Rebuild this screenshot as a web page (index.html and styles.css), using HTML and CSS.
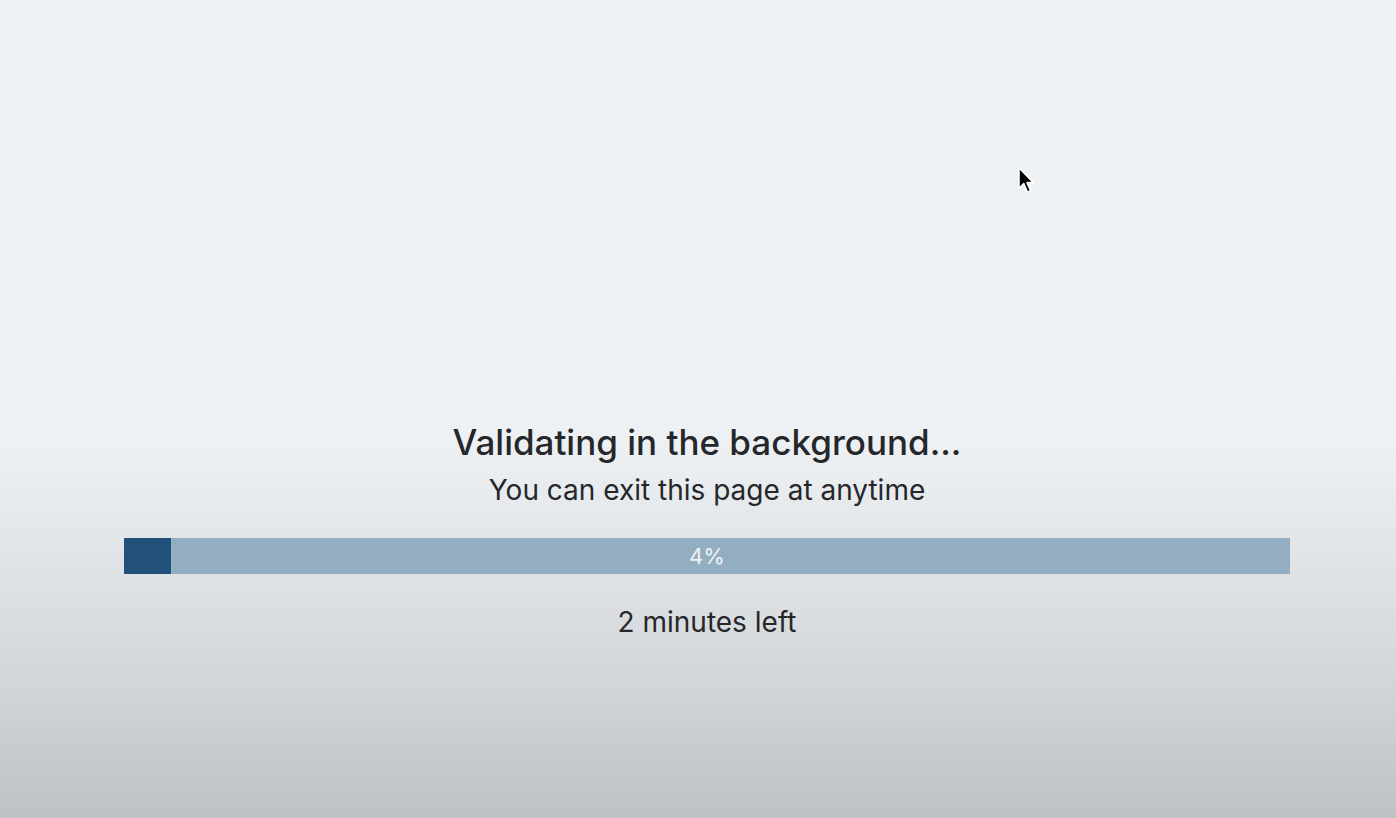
FILE: index.html
```html
<!DOCTYPE html>
<html lang="en">
<head>
<meta charset="utf-8">
<title>Validating</title>
<link rel="stylesheet" href="styles.css">
</head>
<body>
<main class="page">
  <section class="status">
    <h1 class="title">Validating in the background...</h1>
    <p class="subtitle">You can exit this page at anytime</p>
    <div class="progress">
      <div class="progress-fill" style="width: 4%"></div>
      <span class="progress-label">4%</span>
    </div>
    <p class="eta">2 minutes left</p>
  </section>
  <svg class="cursor" width="20" height="30" viewBox="0 0 18 28" aria-hidden="true">
    <path d="M1.5 1.5 L1.5 21 L6 16.5 L9.5 24.5 L12.5 23.2 L9 15.5 L15 15.5 Z" fill="#000" stroke="#fff" stroke-width="1.5" stroke-linejoin="round"/>
  </svg>
</main>
</body>
</html>
```
FILE: styles.css
```css
html, body {
  margin: 0;
  padding: 0;
}
body {
  width: 1396px;
  height: 818px;
  overflow: hidden;
  font-family: Inter, "Noto Sans", sans-serif;
  color: #25272b;
  background: linear-gradient(to bottom, #eef2f5 0px, #eef1f4 440px, #e1e4e7 560px, #d3d6d9 680px, #bfc2c5 818px);
}
.page {
  position: relative;
  height: 818px;
  display: flex;
  flex-direction: column;
}
.status {
  margin-top: 418px;
  margin-left: 124px;
  width: 1166px;
  display: flex;
  flex-direction: column;
  align-items: center;
}
.title {
  margin: 0;
  font-size: 35px;
  font-weight: 500;
  line-height: 48px;
}
.subtitle {
  margin: 6px 0 0;
  font-size: 28px;
  font-weight: 400;
  line-height: 36px;
}
.progress {
  position: relative;
  margin-top: 30px;
  width: 100%;
  height: 36px;
  background: #94aec1;
  display: flex;
  align-items: center;
  justify-content: center;
}
.progress-fill {
  position: absolute;
  left: 0;
  top: 0;
  bottom: 0;
  background: #21507a;
}
.progress-label {
  position: relative;
  color: #eef2f5;
  font-size: 22px;
  line-height: 36px;
}
.eta {
  margin: 30px 0 0;
  font-size: 28px;
  line-height: 36px;
}
.cursor {
  position: absolute;
  left: 1017px;
  top: 166px;
}
```
